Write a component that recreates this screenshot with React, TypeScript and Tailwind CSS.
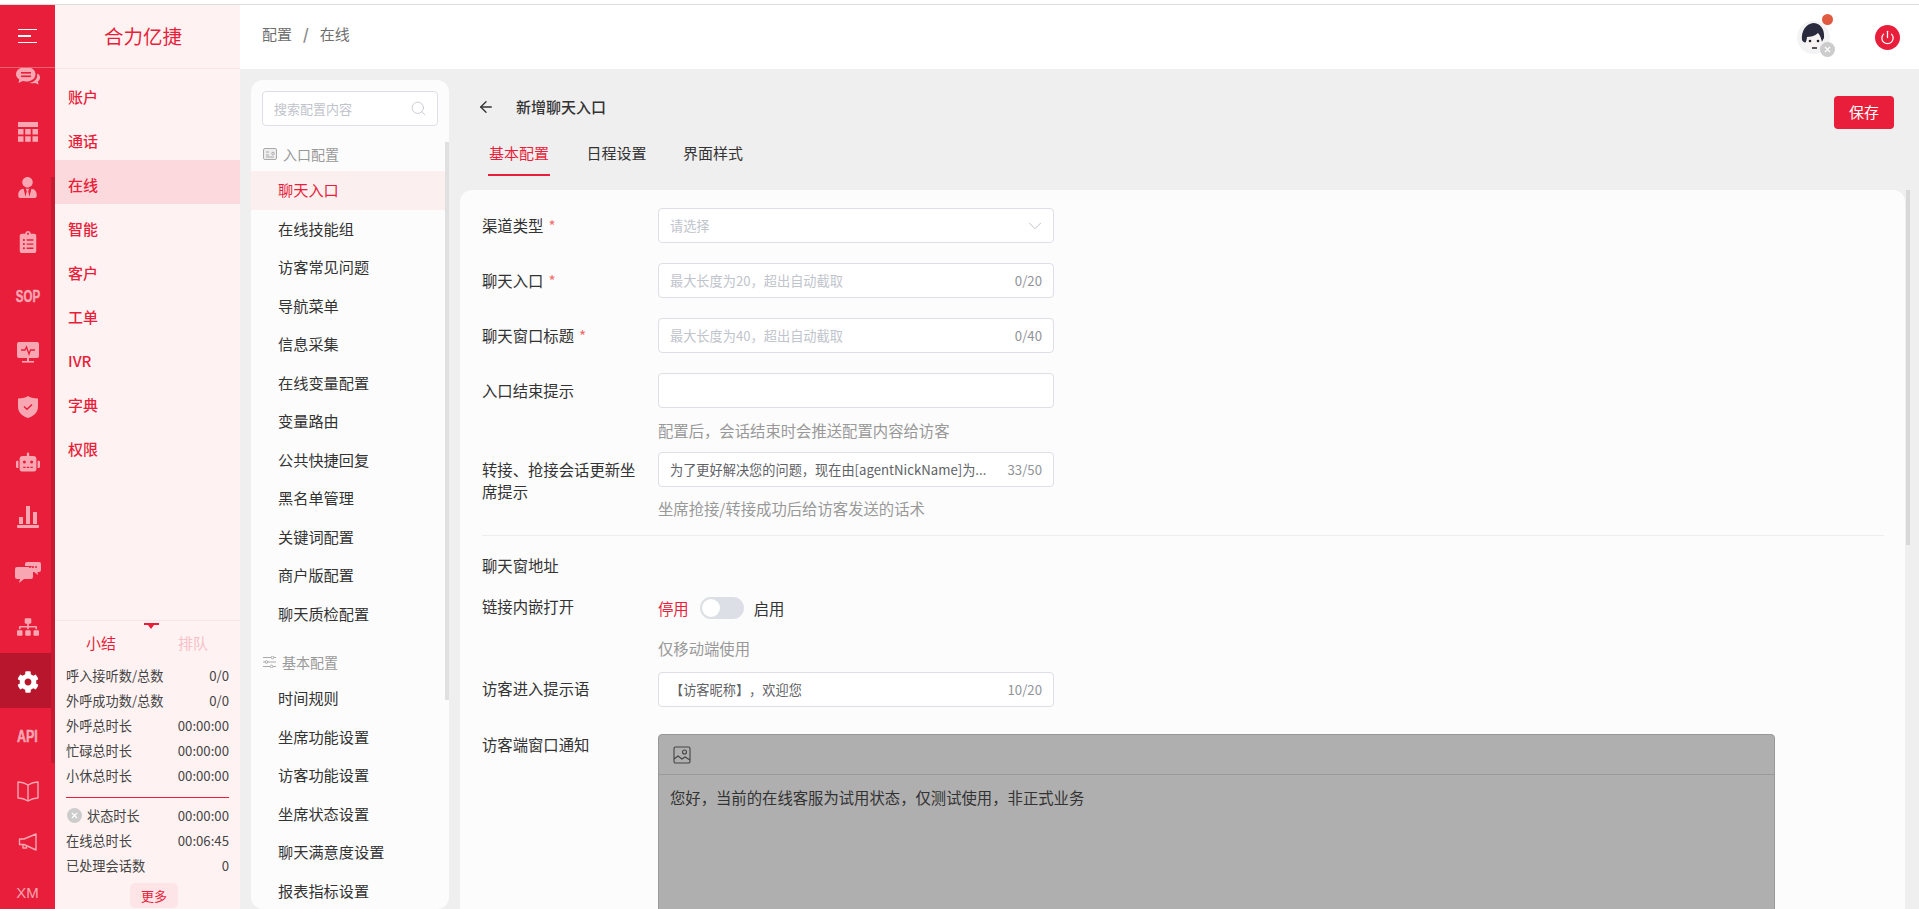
import React from "react";
import { FaUserTie, FaClipboardList, FaRobot, FaCog, FaSitemap } from "react-icons/fa";
import { Search, ChevronDown, ArrowLeft, Power, X } from "lucide-react";

const ChatIcon = () => (
  <svg width="26" height="22" viewBox="0 0 26 22" fill="currentColor">
    <path d="M11 1c5.500 0 9.500 3 9.500 7.200S16.500 15.500 11 15.500c-1.200 0-2.200-.1-3.200-.4L3.500 17l.8-3.600C2 12 1 10.300 1 8.200 1 4 5.500 1 11 1z" />
    <path d="M22 7c2 1.200 3 2.800 3 4.600 0 1.600-.8 3-2.100 4l.6 3-3.400-1.700c-1.800.6-4 .5-5.700-.2 4.500-.4 7.800-3.500 7.800-7.500V7z" />
    <rect x="6" y="6" width="10" height="1.600" fill="#e81e3a" />
    <rect x="6" y="9.500" width="10" height="1.600" fill="#e81e3a" />
  </svg>
);
const GridIcon = () => (
  <svg width="20" height="20" viewBox="0 0 20 20" fill="currentColor">
    <rect x="0" y="0" width="20" height="5" />
    <rect x="0" y="7" width="5.500" height="5.500" />
    <rect x="7.200" y="7" width="5.500" height="5.500" />
    <rect x="14.500" y="7" width="5.500" height="5.500" />
    <rect x="0" y="14.300" width="5.500" height="5.500" />
    <rect x="7.200" y="14.300" width="5.500" height="5.500" />
    <rect x="14.500" y="14.300" width="5.500" height="5.500" />
  </svg>
);
const MonitorIcon = () => (
  <svg width="22" height="21" viewBox="0 0 22 21" fill="currentColor">
    <path d="M2 0h18a2 2 0 0 1 2 2v12a2 2 0 0 1-2 2H2a2 2 0 0 1-2-2V2a2 2 0 0 1 2-2z" />
    <rect x="10" y="16" width="2" height="3" />
    <rect x="5" y="19" width="12" height="1.600" />
    <path d="M4 8h4l1.500-3 2.500 7 1.500-4H18" fill="none" stroke="#e81e3a" strokeWidth="1.300" />
  </svg>
);
const ShieldIcon = () => (
  <svg width="20" height="22" viewBox="0 0 20 22" fill="currentColor">
    <path d="M10 0c2 1.600 5 2.400 10 2.600V11c0 5-4 9-10 11C4 20 0 16 0 11V2.600C5 2.400 8 1.600 10 0z" />
    <path d="M6 10.500l3 2.800 5-4.800" fill="none" stroke="#e81e3a" strokeWidth="1.500" />
  </svg>
);
const ChartIcon = () => (
  <svg width="22" height="22" viewBox="0 0 22 22" fill="currentColor">
    <rect x="2" y="11" width="4" height="7" />
    <rect x="9" y="0" width="4" height="18" />
    <rect x="16" y="6" width="4" height="12" />
    <rect x="0" y="19" width="22" height="3" rx="1" />
  </svg>
);
const ChatsIcon = () => (
  <svg width="26" height="21" viewBox="0 0 26 21" fill="currentColor">
    <path d="M12 0h12a2 2 0 0 1 2 2v6a2 2 0 0 1-2 2h-1.500l.5 3-4-3h-1V7a3 3 0 0 0-3-3h-5V2a2 2 0 0 1 2-2z" />
    <path d="M2 5h14a2 2 0 0 1 2 2v8a2 2 0 0 1-2 2H9l-5 4 1-4H2a2 2 0 0 1-2-2V7a2 2 0 0 1 2-2z" />
    <circle cx="15" cy="5" r="1" fill="#e81e3a" />
    <circle cx="18" cy="5" r="1" fill="#e81e3a" />
    <circle cx="21" cy="5" r="1" fill="#e81e3a" />
  </svg>
);
const BookIcon = () => (
  <svg width="22" height="21" viewBox="0 0 22 21" fill="none" stroke="currentColor" strokeWidth="1.400" strokeLinejoin="round">
    <path d="M11 4C8 2 4 1 1 1v16c3 0 7 1 10 3 3-2 7-3 10-3V1c-3 0-7 1-10 3z" />
    <path d="M11 4v16" />
  </svg>
);
const MegaphoneIcon = () => (
  <svg width="20" height="19" viewBox="0 0 20 19" fill="none" stroke="currentColor" strokeWidth="1.400" strokeLinejoin="round">
    <path d="M18 1L6 6H1.500v5.500H6L18 17z" />
    <path d="M5 11.500V15h3.500v-2" />
  </svg>
);
const Avatar = () => (
  <svg width="33" height="33" viewBox="0 0 33 33">
    <circle cx="16.500" cy="16.500" r="16.500" fill="#f3f3f5" />
    <ellipse cx="17" cy="20" rx="9" ry="9.500" fill="#f7f3f3" />
    <path d="M5 19C4 10 9 3 16 2c7 0 12 6 11 15-1 2-2 3-2 4-1-4-2-7-4-9-3 3-8 4-11 4 0 2-1 4-1 5-1 1-3 0-4-2z" fill="#2a2a3e" />
    <circle cx="13" cy="20" r="1.300" fill="#222" />
    <circle cx="21" cy="20" r="1.300" fill="#222" />
    <path d="M15 27h5" stroke="#555" strokeWidth="2" />
  </svg>
);
const CardIcon = () => (
  <svg width="14" height="12" viewBox="0 0 14 12" fill="none" stroke="#aaa" strokeWidth="1">
    <rect x="0.500" y="0.500" width="13" height="11" rx="1.500" fill="#eee" />
    <path d="M3 4h3M3 7h3M3 9h8" />
    <circle cx="10" cy="5.500" r="1.300" />
  </svg>
);
const SlidersIcon = () => (
  <svg width="13" height="12" viewBox="0 0 13 12" fill="none" stroke="#aaa" strokeWidth="1">
    <path d="M0 1.500h8M11 1.500h2M0 6h2M5 6h8M0 10.500h7M10 10.500h3" />
    <circle cx="9.500" cy="1.500" r="1.300" />
    <circle cx="3.500" cy="6" r="1.300" />
    <circle cx="8.500" cy="10.500" r="1.300" />
  </svg>
);
const ImageIcon = () => (
  <svg width="18" height="18" viewBox="0 0 18 18" fill="none" stroke="#444" strokeWidth="1.100">
    <rect x="1" y="1" width="16" height="16" rx="1.500" />
    <circle cx="11.500" cy="6" r="2" />
    <path d="M1 13l4-3 4 3 3-2 5 3" />
  </svg>
);

const railItems: { node: React.ReactNode; h: string; active?: boolean }[] = [
  { node: <ChatIcon />, h: "h-[55px]" },
  { node: <GridIcon />, h: "h-[55px]" },
  { node: <FaUserTie size={21} />, h: "h-[55px]" },
  { node: <FaClipboardList size={22} />, h: "h-[55px]" },
  { node: <span className="scale-x-[0.72] text-[16px] font-bold leading-none [-webkit-text-stroke:0.5px_currentColor] [font-family:'Liberation_Sans',sans-serif]">SOP</span>, h: "h-[55px]" },
  { node: <MonitorIcon />, h: "h-[55px]" },
  { node: <ShieldIcon />, h: "h-[55px]" },
  { node: <FaRobot size={24} />, h: "h-[55px]" },
  { node: <ChartIcon />, h: "h-[55px]" },
  { node: <ChatsIcon />, h: "h-[55px]" },
  { node: <FaSitemap size={22} />, h: "h-[55px]" },
  { node: <FaCog size={22} className="text-white" />, h: "h-[55px]", active: true },
  { node: <span className="scale-x-[0.78] text-[16px] font-bold leading-none [-webkit-text-stroke:0.5px_currentColor] [font-family:'Liberation_Sans',sans-serif]">API</span>, h: "h-[55px]" },
  { node: <BookIcon />, h: "h-[53px]" },
  { node: <MegaphoneIcon />, h: "h-[50px]" },
  { node: <span className="text-[15px] leading-none [font-family:'Liberation_Sans',sans-serif]">XM</span>, h: "h-[50px]" },
];

const menus = ["账户", "通话", "在线", "智能", "客户", "工单", "IVR", "字典", "权限"];
const group1 = ["聊天入口", "在线技能组", "访客常见问题", "导航菜单", "信息采集", "在线变量配置", "变量路由", "公共快捷回复", "黑名单管理", "关键词配置", "商户版配置", "聊天质检配置"];
const group2 = ["时间规则", "坐席功能设置", "访客功能设置", "坐席状态设置", "聊天满意度设置", "报表指标设置"];
const stats1 = [["呼入接听数/总数", "0/0"], ["外呼成功数/总数", "0/0"], ["外呼总时长", "00:00:00"], ["忙碌总时长", "00:00:00"], ["小休总时长", "00:00:00"]];

function Field({ label, required, children, className = "", labelPt = "pt-[6px]" }: { label: string; required?: boolean; children: React.ReactNode; className?: string; labelPt?: string }) {
  return (
    <div className={"flex " + className}>
      <div className={"w-[176px] shrink-0 pr-[14px] text-[15.350px] leading-[22px] text-[#333] " + labelPt}>
        {label}
        {required && <span className="ml-[5px] text-[#f56c6c]">*</span>}
      </div>
      {children}
    </div>
  );
}

function Box({ children }: { children: React.ReactNode }) {
  return (
    <div className="flex h-[35px] w-[396px] items-center rounded-[4px] border border-[#dcdfe6] bg-white pl-[11px] pr-[11px] text-[13.200px]">
      {children}
    </div>
  );
}

export default function App() {
  return (
    <div className="flex h-[909px] w-[1919px] flex-col overflow-hidden bg-white [text-spacing-trim:space-all] [font-family:'Noto_Sans_CJK_SC','Liberation_Sans',sans-serif]">
      <div className="h-[4px] shrink-0 bg-white" />
      <div className="h-[1px] shrink-0 bg-[#dddddd]" />
      <div className="flex min-h-0 flex-1">
        {/* rail */}
        <div className="relative flex w-[55px] shrink-0 flex-col overflow-hidden bg-[#e81e3a] text-[#f9a6b3]">
          <div className="relative z-10 flex h-[63px] shrink-0 items-center justify-center border-b border-[#ee5f72] bg-[#e81e3a] pr-[1px]">
            <div className="flex w-[19px] flex-col gap-[5px]">
              <div className="h-[1.500px] w-[19px] bg-white" />
              <div className="h-[1.500px] w-[13px] bg-white" />
              <div className="h-[1.500px] w-[19px] bg-white" />
            </div>
          </div>
          <div className="-mt-[20px] flex w-[51px] flex-col">
            {railItems.map((it, i) => (
              <div key={i} className={`flex ${it.h} shrink-0 items-center justify-center pt-[3px] pl-[4px] ${it.active ? "bg-[#b8162c]" : ""}`}>
                {it.node}
              </div>
            ))}
          </div>
          <div className="absolute right-0 top-[172px] h-[586px] w-[4px] bg-[#c91a33]" />
        </div>

        {/* sidebar */}
        <div className="flex w-[185px] shrink-0 flex-col bg-[#fef3f2]">
          <div className="flex h-[64px] shrink-0 items-center justify-center border-b border-[#fde4e6] pb-[2px] pr-[9px] text-[19.500px] text-[#e81e3a]">合力亿捷</div>
          <div className="flex-1 pt-[3px]">
            {menus.map((m) => (
              <div key={m} className={`flex h-[44px] items-center pl-[13px] pt-[6px] text-[15px] font-medium text-[#e81e3a] ${m === "在线" ? "bg-[#fcd9dd]" : ""}`}>{m}</div>
            ))}
          </div>
          <div className="h-[289px] shrink-0 border-t border-[#fde4e6] px-[11px]">
            <div className="flex h-[12px] flex-col items-center pl-[7px] pt-[2px]">
              <div className="h-[2px] w-[15px] bg-[#e81e3a]" />
              <div className="h-0 w-0 border-x-[3px] border-t-[4px] border-x-transparent border-t-[#e81e3a]" />
            </div>
            <div className="flex h-[20px] text-[15px] leading-[20px]">
              <div className="w-[81px] pl-[20px] text-[#e81e3a]">小结</div>
              <div className="pl-[31px] text-[#f9c0c8]">排队</div>
            </div>
            <div className="mt-[10px]">
              {stats1.map(([a, b]) => (
                <div key={a} className="flex h-[25px] items-center justify-between text-[13.200px] text-[#444]"><span>{a}</span><span>{b}</span></div>
              ))}
            </div>
            <div className="mt-[9px] h-[1px] bg-[#e81e3a]" />
            <div className="mt-[5px]">
              <div className="flex h-[25px] items-center justify-between text-[13.200px] text-[#444]">
                <span className="flex items-center">
                  <span className="ml-[1px] mr-[5px] flex h-[15px] w-[15px] items-center justify-center rounded-full bg-[#cccccc]"><X size={9} strokeWidth={3} className="text-white" /></span>
                  状态时长
                </span>
                <span>00:00:00</span>
              </div>
              <div className="flex h-[25px] items-center justify-between text-[13.200px] text-[#444]"><span>在线总时长</span><span>00:06:45</span></div>
              <div className="flex h-[25px] items-center justify-between text-[13.200px] text-[#444]"><span>已处理会话数</span><span>0</span></div>
            </div>
            <div className="mt-[5px] flex justify-center pl-[13px]">
              <div className="flex h-[25px] w-[48px] items-center justify-center rounded-[5px] bg-[#fde4e7] text-[13px] text-[#e81e3a]">更多</div>
            </div>
          </div>
        </div>

        {/* main */}
        <div className="flex min-w-0 flex-1 flex-col">
          <div className="flex h-[64px] shrink-0 items-center justify-between bg-white pb-[6px] pl-[22px]">
            <div className="flex items-center text-[15px] text-[#6e6e6e]">
              <span>配置</span>
              <span className="mx-[11px] font-semibold text-[#888]">/</span>
              <span>在线</span>
            </div>
            <div className="flex items-center pr-[19px] pt-[6px]">
              <div className="relative mr-[45px] h-[33px] w-[33px]">
                <Avatar />
                <span className="absolute -top-[7px] right-[-3px] h-[11px] w-[11px] rounded-full bg-[#e05a40]" />
                <span className="absolute -bottom-[3px] -right-[5px] flex h-[15px] w-[15px] items-center justify-center rounded-full bg-[#cccccc]"><X size={9} strokeWidth={3} className="text-white" /></span>
              </div>
              <span className="flex h-[25px] w-[25px] items-center justify-center rounded-full bg-[#e81e3a]"><Power size={15} strokeWidth={2} className="text-white" /></span>
            </div>
          </div>
          <div className="flex min-h-0 flex-1 gap-[11px] bg-[#efefef] pl-[11px] pt-[11px]">
            {/* config list */}
            <div className="relative w-[198px] shrink-0 overflow-hidden rounded-[12px] bg-[#fcfcfc]">
              <div className="px-[11px] pt-[11px]">
                <div className="flex h-[35px] w-[176px] items-center justify-between rounded-[4px] border border-[#dcdfe6] bg-white pl-[11px] pr-[10px] text-[13px] text-[#c0c4cc]">
                  <span>搜索配置内容</span>
                  <Search size={17} strokeWidth={1.200} />
                </div>
              </div>
              <div className="mr-[4px] mt-[18px]">
                <div className="flex h-[20px] items-center gap-[6px] pl-[12px] text-[14px] text-[#999]"><CardIcon />入口配置</div>
                <div className="mt-[7px]">
                  {group1.map((g, i) => (
                    <div key={g} className={`flex h-[38.500px] items-center pb-[1px] pl-[27px] text-[15.200px] ${i === 0 ? "bg-[#fbeff0] text-[#e81e3a]" : "text-[#333]"}`}>{g}</div>
                  ))}
                </div>
                <div className="mt-[19px] flex h-[20px] items-center gap-[6px] pl-[12px] text-[14px] text-[#999]"><SlidersIcon />基本配置</div>
                <div className="mt-[7px]">
                  {group2.map((g) => (
                    <div key={g} className="flex h-[38.500px] items-center pb-[1px] pl-[27px] text-[15.200px] text-[#333]">{g}</div>
                  ))}
                </div>
              </div>
              <div className="absolute right-0 top-[62px] h-[558px] w-[4px] bg-[#e0e0e0]" />
            </div>

            {/* content */}
            <div className="relative flex min-w-0 flex-1 flex-col">
              <div className="flex h-[110px] shrink-0 flex-col">
                <div className="flex items-start justify-between pr-[25px]">
                  <div className="flex h-[54px] items-center pl-[17px]">
                    <ArrowLeft size={18} strokeWidth={1.800} className="text-[#333]" />
                    <span className="ml-[21px] text-[15px] font-medium text-[#333]">新增聊天入口</span>
                  </div>
                  <div className="mt-[16px] flex h-[33px] w-[60px] items-center justify-center rounded-[4px] bg-[#e81e3a] text-[15px] text-white">保存</div>
                </div>
                <div className="flex gap-[36.500px] pl-[28px] pt-[7px] text-[15px] text-[#333]">
                  <div className="flex h-[34.500px] flex-col items-center justify-start border-b-2 border-[#e81e3a] px-[1px] leading-[24px] text-[#e81e3a]">基本配置</div>
                  <div className="leading-[24px]">日程设置</div>
                  <div className="leading-[24px]">界面样式</div>
                </div>
              </div>
              <div className="mr-[14px] min-h-0 flex-1 overflow-hidden rounded-t-[12px] bg-[#fcfcfc] pl-[22px] pr-[21px] pt-[18px]">
                <Field label="渠道类型" required className="mb-[20px]">
                  <Box><span className="flex-1 text-[#c0c4cc]">请选择</span><ChevronDown size={22} strokeWidth={0.800} className="-mr-[4px] text-[#a8acb4]" /></Box>
                </Field>
                <Field label="聊天入口" required className="mb-[20px]">
                  <Box><span className="flex-1 text-[#c0c4cc]">最大长度为20，超出自动截取</span><span className="text-[#909399]">0/20</span></Box>
                </Field>
                <Field label="聊天窗口标题" required className="mb-[20px]">
                  <Box><span className="flex-1 text-[#c0c4cc]">最大长度为40，超出自动截取</span><span className="text-[#909399]">0/40</span></Box>
                </Field>
                <Field label="入口结束提示">
                  <div>
                    <Box><span /></Box>
                    <div className="mt-[12px] h-[20px] text-[15.350px] leading-[20px] text-[#999]">配置后，会话结束时会推送配置内容给访客</div>
                  </div>
                </Field>
                <Field label="转接、抢接会话更新坐席提示" className="mt-[12px]">
                  <div>
                    <Box>
                      <span className="flex-1 whitespace-nowrap text-[#606266]">为了更好解决您的问题，现在由[agentNickName]为...</span>
                      <span className="text-[#909399]">33/50</span>
                    </Box>
                    <div className="mt-[11px] h-[20px] text-[15.350px] leading-[20px] text-[#999]">坐席抢接/转接成功后给访客发送的话术</div>
                  </div>
                </Field>
                <div className="mt-[17px] h-[1px] bg-[#eeeeee]" />
                <div className="mt-[19px] h-[20px] text-[15.350px] leading-[20px] text-[#333]">聊天窗地址</div>
                <div className="mt-[22px] flex h-[22px] items-center">
                  <div className="-mt-[2px] w-[176px] text-[15.350px] text-[#333]">链接内嵌打开</div>
                  <span className="text-[15.350px] text-[#e81e3a]">停用</span>
                  <span className="ml-[11px] flex h-[22px] w-[44px] items-center rounded-full bg-[#dcdfe6] pl-[2px]"><span className="h-[18px] w-[18px] rounded-full bg-white" /></span>
                  <span className="ml-[10px] text-[15.350px] text-[#333]">启用</span>
                </div>
                <div className="mt-[19px] h-[20px] pl-[176px] text-[15.350px] leading-[20px] text-[#999]">仅移动端使用</div>
                <Field label="访客进入提示语" className="mt-[14px]" labelPt="pt-[5px]">
                  <Box><span className="flex-1 text-[#606266]">【访客昵称】，欢迎您</span><span className="text-[#909399]">10/20</span></Box>
                </Field>
                <Field label="访客端窗口通知" className="mt-[27px]" labelPt="-mt-[1px]">
                  <div className="h-[300px] w-[1117px] rounded-t-[4px] border border-[#999] bg-[#afafaf]">
                    <div className="flex h-[40px] items-center border-b border-[#999] pl-[14px]"><ImageIcon /></div>
                    <div className="pl-[11px] pt-[11px] text-[15.350px] leading-[22px] text-[#333]">您好，当前的在线客服为试用状态，仅测试使用，非正式业务</div>
                  </div>
                </Field>
              </div>
              <div className="absolute right-[9px] top-[110px] h-[355px] w-[4px] bg-[#d8d8d8]" />
            </div>
          </div>
        </div>
      </div>
    </div>
  );
}
